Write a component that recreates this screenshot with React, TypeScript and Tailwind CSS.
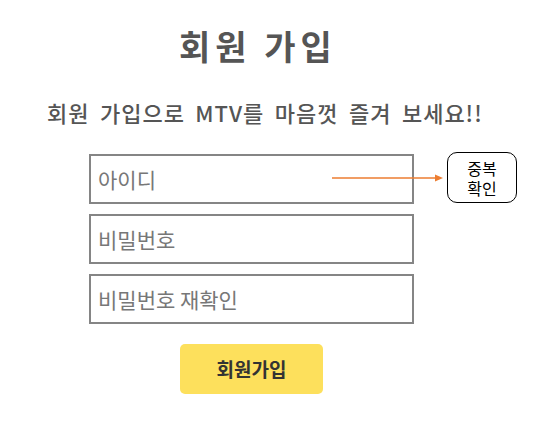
export default function App() {
  const font = "font-['Noto_Sans_CJK_KR','Noto_Sans',sans-serif]";
  return (
    <div className={`w-[540px] h-[432px] bg-white relative ${font}`}>
      <div className="flex flex-col items-start">
        {/* title */}
        <h1 className="ml-[179px] mt-[22px] text-[34px] font-bold leading-[48px] text-[#555] tracking-[5px]">
          회원 가입
        </h1>

        <p className="ml-[47px] mt-[27px] text-[22px] font-medium leading-[30px] text-[#555] tracking-[1px] [word-spacing:4.5px]">
          회원 가입으로 MTV를 마음껏 즐겨 보세요!!
        </p>

        <div className="ml-[89px] mt-[27px] flex flex-col gap-[10px]">
          <div className="relative">
            <input
              className="w-[325px] h-[50px] border-2 border-[#858585] px-[7px] text-[21px] text-[#555] placeholder:text-[#777] outline-none"
              placeholder="아이디"
            />
            {/* annotation: arrow + 중복확인 bubble */}
            <svg
              className="absolute left-[243px] top-[19px]"
              width="112"
              height="10"
              viewBox="0 0 112 10"
            >
              <line x1="0" y1="5" x2="104" y2="5" stroke="#ed7d31" strokeWidth="1.3" />
              <path d="M103 1.5 L111 5 L103 8.5 Z" fill="#ed7d31" />
            </svg>
            <div className="absolute left-[358px] top-[-2px] w-[70px] h-[51px] border border-black rounded-[10px] flex flex-col items-center justify-center text-[16px] leading-[20px] text-black">
              <span>중복</span>
              <span>확인</span>
            </div>
          </div>
          <input
            className="w-[325px] h-[50px] border-2 border-[#858585] px-[7px] text-[21px] text-[#555] placeholder:text-[#777] outline-none"
            placeholder="비밀번호"
          />
          <input
            className="w-[325px] h-[50px] border-2 border-[#858585] px-[7px] text-[21px] text-[#555] placeholder:text-[#777] outline-none"
            placeholder="비밀번호 재확인"
          />
        </div>

        <button className="ml-[180px] mt-[20px] w-[143px] h-[50px] rounded-[5px] bg-[#fde05c] text-[19px] font-bold text-[#333]">
          회원가입
        </button>
      </div>
    </div>
  );
}
